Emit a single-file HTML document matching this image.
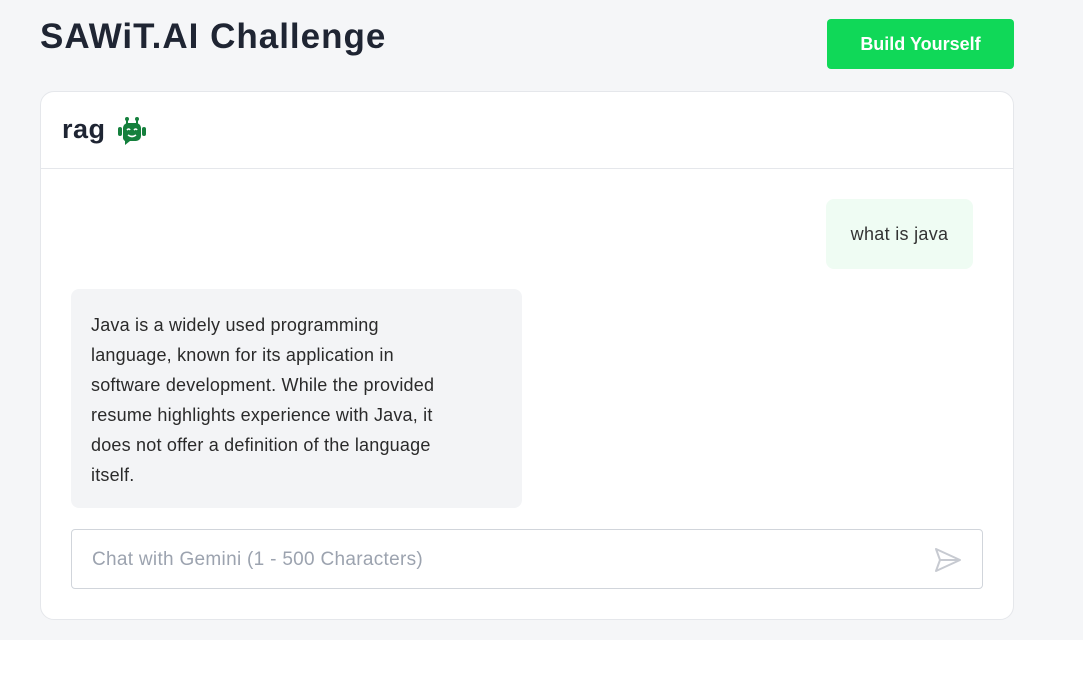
<!DOCTYPE html>
<html><head><style>
body{margin:0;width:1083px;height:683px;background:#fff;font-family:"Liberation Sans",sans-serif;position:relative;overflow:hidden}
.bg{position:absolute;left:0;top:0;width:1083px;height:640px;background:#f5f6f8}
h1{position:absolute;left:40px;top:17px;margin:0;font-size:35px;font-weight:bold;color:#1f2533;letter-spacing:1px}
.btn{position:absolute;left:827px;top:19px;width:187px;height:50px;background:#10d858;color:#fff;border-radius:4px;font-size:18px;font-weight:bold;display:flex;align-items:center;justify-content:center}
.card{position:absolute;left:40px;top:91px;width:972px;height:527px;background:#fff;border:1px solid #e5e7eb;border-radius:14px}
.hd{height:76px;border-bottom:1px solid #e5e7eb;position:relative}
.hd span{position:absolute;left:21px;top:22px;font-size:27px;font-weight:bold;color:#1f2533;letter-spacing:0.5px}
.u{position:absolute;left:785px;top:107px;width:147px;height:70px;background:#effcf3;border-radius:8px;font-size:18px;color:#333;display:flex;align-items:center;justify-content:center;letter-spacing:0.3px}
.b{position:absolute;left:30px;top:197px;width:451px;height:219px;background:#f3f4f6;border-radius:8px;padding:21px 20px;box-sizing:border-box;font-size:18px;line-height:30px;color:#2a2a2a;white-space:nowrap;letter-spacing:0.2px}
.in{position:absolute;left:30px;top:437px;width:912px;height:60px;border:1px solid #d1d5db;border-radius:4px;font-size:19px;color:#9ca3af;box-sizing:border-box;padding:19px 20px;letter-spacing:0.3px}
</style></head><body>
<div class="bg"></div>
<h1>SAWiT.AI Challenge</h1>
<div class="btn">Build Yourself</div>
<div class="card">
<div class="hd"><span>rag</span>
<svg style="position:absolute;left:77px;top:24px" width="28" height="30" viewBox="0 0 28 30"><circle cx="9" cy="3" r="2" fill="#15803d"/><circle cx="19" cy="3" r="2" fill="#15803d"/><rect x="8" y="3" width="2" height="5" fill="#15803d"/><rect x="18" y="3" width="2" height="5" fill="#15803d"/><rect x="0" y="11" width="4" height="9" rx="2" fill="#15803d"/><rect x="24" y="11" width="4" height="9" rx="2" fill="#15803d"/><path d="M5 12a5 5 0 015-5h8a5 5 0 015 5v8a5 5 0 01-5 5h-6l-5 4v-4a4 4 0 01-2-4z" fill="#15803d"/><path d="M9 14q2-2 3 0M16 14q2-2 3 0M10 19q4 3 8 0" stroke="#fff" stroke-width="1.6" fill="none"/></svg>
</div>
<div class="u">what is java</div>
<div class="b">Java is a widely used programming<br>language, known for its application in<br>software development. While the provided<br>resume highlights experience with Java, it<br>does not offer a definition of the language<br>itself.</div>
<div class="in">Chat with Gemini (1 - 500 Characters)</div>
<svg style="position:absolute;left:892px;top:454px" width="30" height="28" viewBox="0 0 30 28"><path d="M3 3l24 11-24 11 4-11z M7 14h20" stroke="#c7cad1" stroke-width="2" fill="none" stroke-linejoin="round"/></svg>
</div>
</body></html>
